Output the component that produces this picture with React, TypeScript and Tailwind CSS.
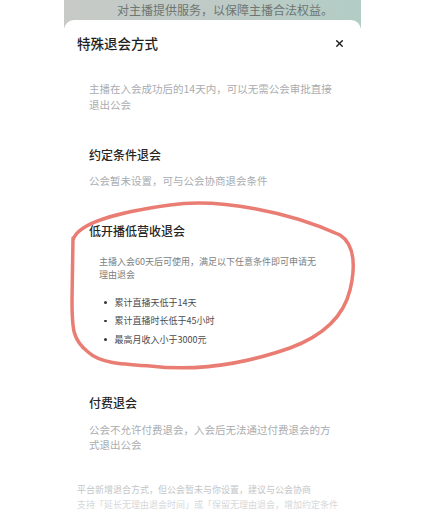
import { X } from 'lucide-react';

const cjk = { fontFamily: '"Noto Sans CJK SC", "Noto Sans", sans-serif' };

const bullets = ['累计直播天低于14天', '累计直播时长低于45小时', '最高月收入小于3000元'];

// hand-drawn marker circle over the third section
function MarkerCircle() {
  return (
    <svg
      className="pointer-events-none absolute left-0 top-0"
      width="433"
      height="510"
      viewBox="0 0 433 510"
      fill="none"
    >
      <path
        d="M73 240 C78 222, 120 212, 170 205 C220 198, 290 212, 340 235 C356 245, 355 270, 350 290 C344 315, 325 335, 290 348 C250 362, 200 372, 150 366 C120 364, 100 363, 88 352 C73 340, 72 330, 72 300 L73 238"
        stroke="#e9766b"
        strokeWidth="3.5"
        strokeLinecap="round"
        strokeLinejoin="round"
        opacity="0.95"
      />
    </svg>
  );
}

export default function App() {
  return (
    <div className="relative h-[510px] w-[433px] overflow-hidden bg-white" style={cjk}>
      <div className="ml-[64px] w-[297px]">
        {/* dimmed page behind the sheet */}
        <div className="h-[28px] bg-gradient-to-r from-[#c7cac7] via-[#bfcac6] to-[#b2cdc5] pl-[53px] pt-[1px] text-[12px] leading-[18px] text-[#6e7672]">
          对主播提供服务，以保障主播合法权益。
        </div>

        {/* bottom sheet */}
        <div className="-mt-[8px] rounded-t-[10px] bg-white">
          <div className="flex items-center justify-between pl-[13px] pr-[16px] pt-[13px]">
            <h1 className="text-[13.5px] font-medium leading-[20px] text-[#1f1f1f]">特殊退会方式</h1>
            <X className="h-[11px] w-[11px] text-[#222]" strokeWidth={3} />
          </div>

          <div className="pl-[25px] pr-[24px]">
            <p className="mt-[28px] text-[10.5px] leading-[16px] text-[#a9acaf]">
              主播在入会成功后的14天内，可以无需公会审批直接
              <br />
              退出公会
            </p>

            <h2 className="mt-[33px] text-[12px] font-medium leading-[18px] text-[#262626]">约定条件退会</h2>
            <p className="mt-[9px] text-[10.5px] leading-[16px] text-[#a9acaf]">公会暂未设置，可与公会协商退会条件</p>

            <h2 className="mt-[33px] text-[12px] font-medium leading-[18px] text-[#262626]">低开播低营收退会</h2>
            <div className="pl-[10px]">
              <p className="mt-[15px] text-[9px] leading-[13px] text-[#7d7f82]">
                主播入会60天后可使用，满足以下任意条件即可申请无
                <br />
                理由退会
              </p>
              <ul className="mt-[12px] flex flex-col">
                {bullets.map((b) => (
                  <li key={b} className="flex h-[18.5px] items-center gap-[8px] pl-[5px] text-[9px] text-[#4a4c4f]">
                    <span className="h-[2.5px] w-[2.5px] rounded-full bg-[#333]" />
                    {b}
                  </li>
                ))}
              </ul>
            </div>

            <h2 className="mt-[45px] text-[12px] font-medium leading-[18px] text-[#262626]">付费退会</h2>
            <p className="mt-[10px] text-[10.5px] leading-[15px] text-[#a9acaf]">
              公会不允许付费退会，入会后无法通过付费退会的方
              <br />
              式退出公会
            </p>
          </div>

          <div className="mt-[30px] pl-[13px] text-[9px] leading-[15px]">
            <p className="text-[#c4c6c8]">平台新增退合方式，但公会暂未与你设置，建议与公会协商</p>
            <p className="text-[#d6d8da]">支持「延长无理由退会时间」或「保留无理由退会，增加约定条件</p>
          </div>
        </div>
      </div>
      <MarkerCircle />
    </div>
  );
}
